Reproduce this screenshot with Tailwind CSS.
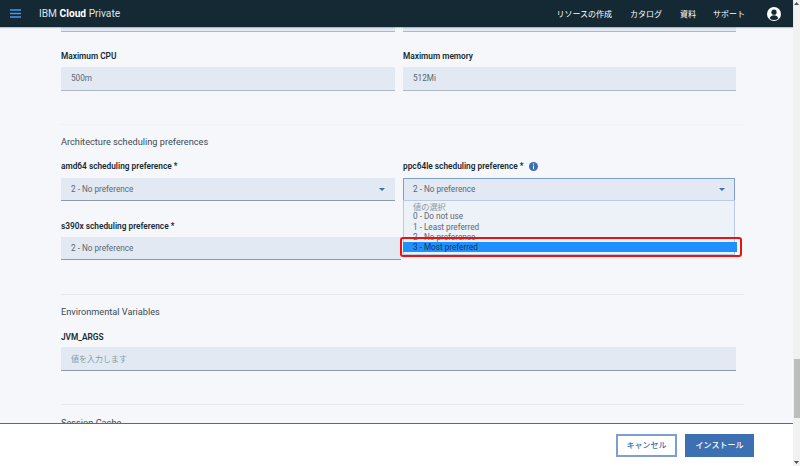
<!DOCTYPE html>
<html lang="ja"><head><meta charset="utf-8">
<script src="https://cdn.jsdelivr.net/npm/@tailwindcss/browser@4"></script>
</head>
<body class="m-0 overflow-hidden">
<div class="flex w-[800px] h-[466px] overflow-hidden bg-white font-['Roboto','Noto_Sans_CJK_JP',sans-serif] text-[#152935]">
  <div class="w-[793px] h-full flex flex-col shrink-0">
    <header class="h-[27px] shrink-0 bg-[#152935] flex items-center text-white z-10 shadow-[0_1px_1px_rgba(21,41,53,0.25)]">
      <svg class="ml-[10px] w-[11px] h-[9px]" viewBox="0 0 11 9"><path d="M0 1h11M0 4.500h11M0 8h11" stroke="#4f94ea" stroke-width="1.300"/></svg>
      <div class="ml-[18px] text-[10.200px] text-[#dfe3e6]">IBM <span class="font-bold text-white">Cloud</span> Private</div>
      <nav class="ml-auto flex items-center text-[8px] text-white font-['Noto_Sans_CJK_JP',sans-serif]">
        <span>リソースの作成</span><span class="ml-[18px]">カタログ</span><span class="ml-[18px]">資料</span><span class="ml-[17px]">サポート</span>
      </nav>
      <svg class="ml-[22px] mr-[12px] w-[14px] h-[14px]" viewBox="0 0 14 14"><circle cx="7" cy="7" r="7" fill="#fff"/><circle cx="7" cy="5.200" r="2.600" fill="#152935"/><path d="M2.600 11.200c.8-2 2.400-3 4.400-3s3.600 1 4.400 3a6 6 0 0 1-8.800 0z" fill="#152935"/></svg>
    </header>
    <main class="flex-1 min-h-0 overflow-hidden bg-[#f5f7fb] pl-[61px] pr-[49px] relative">
      <div class="h-[5px] flex gap-[8px]"><div class="w-[334px] shrink-0 h-[5px] bg-[#e2e9f3] border-b border-[#aeb8c4]"></div><div class="w-[333px] shrink-0 h-[5px] bg-[#e2e9f3] border-b border-[#aeb8c4]"></div></div>

      <div class="grid grid-cols-[334px_333px] gap-x-[8px] mt-[19px]">
        <div>
          <div class="h-[11px] flex items-center text-[8.300px] font-semibold">Maximum CPU</div>
          <div class="mt-[5px] h-[24px] bg-[#e2e9f3] border-b border-[#aeb8c4] pl-[10px] flex items-center text-[8.200px] text-[#5a6872]">500m</div>
        </div>
        <div>
          <div class="h-[11px] flex items-center text-[8.300px] font-semibold">Maximum memory</div>
          <div class="mt-[5px] h-[24px] bg-[#e2e9f3] border-b border-[#aeb8c4] pl-[10px] flex items-center text-[8.200px] text-[#5a6872]">512Mi</div>
        </div>
      </div>

      <div class="mt-[33px] h-px bg-[#eef0f3]"></div>
      <div class="mt-[10px] h-[13px] flex items-center text-[9.200px] text-[#3d4a55]">Architecture scheduling preferences</div>

      <div class="grid grid-cols-[334px_333px] gap-x-[8px] mt-[13px]">
        <div>
          <div class="h-[11px] flex items-center text-[8.300px] font-semibold">amd64 scheduling preference&nbsp;*</div>
          <div class="mt-[6px] h-[23px] bg-[#e2e9f3] border-b border-[#8c9ba5] pl-[10px] pr-[10px] flex items-center justify-between text-[8.200px] text-[#5a6872]">2 - No preference
            <svg class="w-[6px] h-[3px]" viewBox="0 0 6 3"><path d="M0 0h6L3 3z" fill="#3d70b2"/></svg></div>
        </div>
        <div class="relative">
          <div class="h-[11px] flex items-center text-[8.300px] font-semibold">ppc64le scheduling preference&nbsp;*
            <svg class="ml-[6px] w-[9px] h-[9px]" viewBox="0 0 9 9"><circle cx="4.500" cy="4.500" r="4.500" fill="#3d70b2"/><path d="M4.500 1.600v1.100M4.500 3.700v3.500" stroke="#fff" stroke-width="1"/></svg></div>
          <div class="mt-[6px] h-[23px] w-[332px] bg-[#e2e9f3] border border-[#7c9fd0] pl-[9px] pr-[9px] flex items-center justify-between text-[8.200px] text-[#5a6872]">2 - No preference
            <svg class="w-[6px] h-[3px]" viewBox="0 0 6 3"><path d="M0 0h6L3 3z" fill="#3d70b2"/></svg></div>
          <div class="absolute left-[0px] top-[39px] w-[332px] h-[55px] z-10 bg-[#edf1f8] border border-[#b8cbe6] text-[8.200px] text-[#5a6872] pl-[9px] leading-[10.300px]">
            <div class="text-[#8c9ba5] font-['Noto_Sans_CJK_JP',sans-serif]">値の選択</div>
            <div>0 - Do not use</div>
            <div>1 - Least preferred</div>
            <div>2 - No preference</div>
          </div>
          <div class="absolute left-[0px] top-[81px] w-[334px] h-[10px] z-20 bg-[#1e90ff] text-[8.200px] leading-[10px] pl-[10px] text-[#1d3649]">3 - Most preferred</div>
          <div class="absolute -left-[3px] top-[76px] w-[342px] h-[20px] z-30 border-2 border-[#ee1111] rounded-[3px]"></div>
        </div>
        <div class="mt-[20px]">
          <div class="h-[11px] flex items-center text-[8.300px] font-semibold">s390x scheduling preference&nbsp;*</div>
          <div class="mt-[5px] w-[340px] h-[23px] bg-[#e2e9f3] border-b border-[#8c9ba5] pl-[10px] flex items-center text-[8.200px] text-[#5a6872]">2 - No preference</div>
        </div>
      </div>

      <div class="mt-[34px] h-px bg-[#e6e9ed]"></div>
      <div class="mt-[10px] h-[13px] flex items-center text-[9.200px] text-[#3d4a55]">Environmental Variables</div>

      <div class="mt-[14px] h-[11px] flex items-center text-[8.300px] font-semibold">JVM_ARGS</div>
      <div class="mt-[4px] w-[675px] h-[24px] bg-[#e2e9f3] border-b border-[#8c9ba5] pl-[10px] flex items-center text-[8px] text-[#8c9ba5] font-['Noto_Sans_CJK_JP',sans-serif]">値を入力します</div>

      <div class="mt-[33px] h-px bg-[#e6e9ed]"></div>
      <div class="mt-[11px] h-[13px] flex items-center text-[9.200px] text-[#3d4a55]">Session Cache</div>
    </main>
    <footer class="h-[43px] shrink-0 bg-white border-t border-[#3d70b2] flex items-center justify-end pr-[39px] gap-[8px] font-['Noto_Sans_CJK_JP',sans-serif] text-[8px] font-medium">
      <button class="w-[61px] h-[23px] border-2 border-[#7c9fd0] text-[#3d70b2] flex items-center justify-center">キャンセル</button>
      <button class="w-[69px] h-[23px] bg-[#3d70b2] text-white flex items-center justify-center">インストール</button>
    </footer>
  </div>
  <div class="w-[7px] h-full bg-[#f1f1f1] relative">
    <svg class="absolute top-[2px] left-[1px] w-[5px] h-[3px]" viewBox="0 0 5 3"><path d="M2.500 0L5 3H0z" fill="#505050"/></svg>
    <div class="absolute top-[359px] left-[1px] h-[59px] w-[6px] bg-[#bdbdbd]"></div>
    <svg class="absolute bottom-[2px] left-[1px] w-[5px] h-[3px]" viewBox="0 0 5 3"><path d="M0 0h5L2.500 3z" fill="#505050"/></svg>
  </div>
</div>
</body></html>
